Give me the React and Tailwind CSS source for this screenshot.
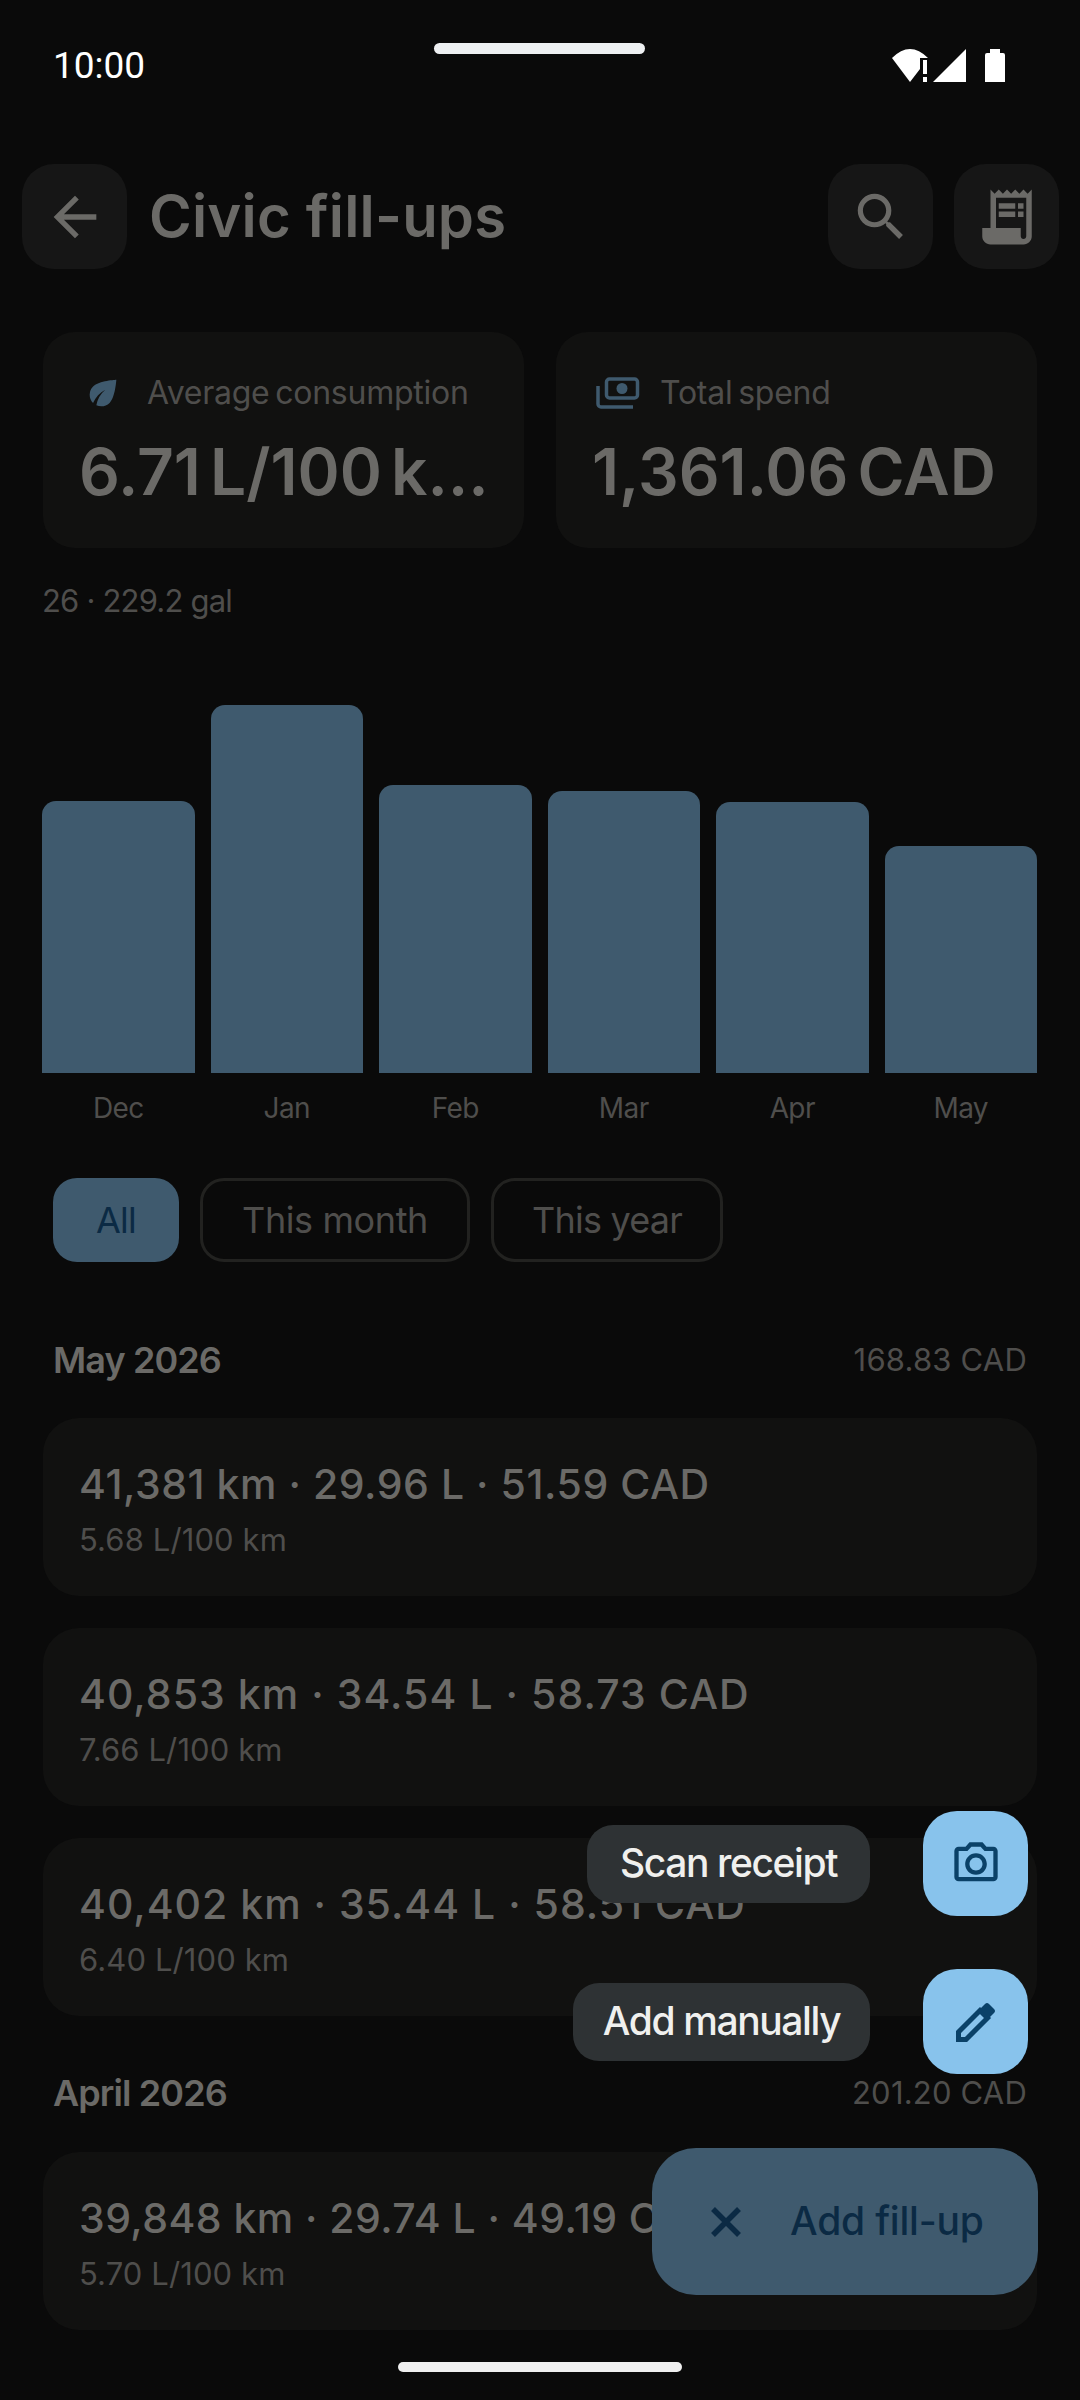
import { MdArrowBack, MdSearch, MdReceiptLong, MdEco, MdOutlinePhotoCamera } from 'react-icons/md'

const bars = [
  { label: 'Dec', height: 272 },
  { label: 'Jan', height: 368 },
  { label: 'Feb', height: 288 },
  { label: 'Mar', height: 282 },
  { label: 'Apr', height: 271 },
  { label: 'May', height: 227 },
]

function StatusIcons() {
  return (
    <svg width="120" height="34" viewBox="0 0 120 34" fill="white">
      <path d="M1 9 Q19 -9 37 9 L29 9 L29 20 L19 33 Z" />
      <rect x="32" y="11" width="4" height="14" />
      <rect x="32" y="28" width="4" height="5" />
      <path d="M42 33 L75 0 L75 33 Z" />
      <path d="M99 4 L99 0 L109 0 L109 4 L112 4 Q114 4 114 6 L114 33 L94 33 L94 6 Q94 4 96 4 Z" />
    </svg>
  )
}

function MoneyIcon() {
  return (
    <svg width="44" height="32" viewBox="0 0 44 32" fill="none" stroke="currentColor" strokeWidth="3.5" className="text-[#3f5a6e]">
      <rect x="10.5" y="2" width="31" height="19" rx="3" />
      <circle cx="26" cy="11.5" r="5.5" fill="currentColor" stroke="none" />
      <path d="M2 9 V27 a3 3 0 0 0 3 3 H37" />
    </svg>
  )
}

function PencilIcon() {
  return (
    <svg width="40" height="40" viewBox="0 0 40 40" fill="none" stroke="currentColor" strokeWidth="5">
      <path d="M2.5 30 L24 8.5 L31.5 16 L10 37.5 L2.5 37.5 Z" />
      <path d="M24 7 L29 2 Q31 0 33 2 L38 7 Q40 9 38 11 L33 16 Z" fill="currentColor" stroke="none" />
    </svg>
  )
}

function CloseIcon() {
  return (
    <svg width="30" height="30" viewBox="0 0 30 30" fill="none" stroke="currentColor" strokeWidth="5.5">
      <path d="M2 2 L28 28 M28 2 L2 28" />
    </svg>
  )
}

function SquareButton({ children }) {
  return (
    <div className="flex h-[105px] w-[105px] items-center justify-center rounded-[32px] bg-[#161616] text-[#6b6a67]">
      {children}
    </div>
  )
}

function StatCard({ icon, label, value, gap }) {
  return (
    <div className="h-[216px] w-[481px] rounded-[32px] bg-[#111110] px-[36px] pt-[39px]">
      <div className="flex h-[44px] items-center pl-[4px]" style={{ gap }}>
        {icon}
        <span className="text-[32px] leading-[44px] tracking-[-0.25px] whitespace-nowrap text-[#4f4e4c] [word-spacing:-3px]">{label}</span>
      </div>
      <div className="mt-[20px] text-[64px] leading-[74px] font-semibold tracking-[0px] whitespace-nowrap text-[#6b6a67] [word-spacing:-7px]">
        {value}
      </div>
    </div>
  )
}

function FillUpRow({ title, sub, tracking }) {
  return (
    <div className="h-[178px] rounded-[36px] bg-[#111110] px-[36px] pt-[39px]">
      <div className="text-[41px] leading-[54px] font-medium whitespace-nowrap text-[#6b6a67]" style={{ letterSpacing: tracking }}>
        {title}
      </div>
      <div className="mt-[9px] text-[31px] leading-[40px] tracking-[0.1px] text-[#4f4e4c]">{sub}</div>
    </div>
  )
}

function MonthHeader({ month, total }) {
  return (
    <div className="flex h-[52px] items-center justify-between px-[10px]">
      <span className="text-[36px] font-semibold tracking-[-0.9px] text-[#6b6a67]">{month}</span>
      <span className="text-[31px] tracking-[0.2px] text-[#4f4e4c]">{total}</span>
    </div>
  )
}

function MiniFab({ label, width, children }) {
  return (
    <div className="flex items-center justify-end gap-[53px]">
      <div
        className="flex h-[78px] items-center justify-center rounded-[26px] bg-[#2e3234] text-[39px] font-medium tracking-[-1.4px] text-[#f0f0ee]"
        style={{ width }}
      >
        {label}
      </div>
      <div className="flex h-[105px] w-[105px] items-center justify-center rounded-[34px] bg-[#88c3ec] text-[#0a4168]">
        {children}
      </div>
    </div>
  )
}

export default function App() {
  return (
    <div className="relative h-[2400px] w-[1080px] overflow-hidden bg-[#0a0a0a] font-['Inter',sans-serif]">
      <div className="relative h-[164px]">
        <div className="absolute top-[43px] left-[434px] h-[11px] w-[211px] rounded-full bg-[#eef0f2]" />
        <div className="absolute top-[44px] left-[53px] font-['Roboto',sans-serif] text-[37px] leading-[44px] text-white">10:00</div>
        <div className="absolute top-[49px] left-[891px]">
          <StatusIcons />
        </div>
      </div>

      <div className="flex h-[105px] items-center pr-[21px] pl-[22px]">
        <SquareButton>
          <MdArrowBack size={64} />
        </SquareButton>
        <h1 className="ml-[22px] text-[58px] font-semibold tracking-[0.2px] text-[#6b6a67]">Civic fill-ups</h1>
        <div className="ml-auto flex gap-[21px]">
          <SquareButton>
            <MdSearch size={62} />
          </SquareButton>
          <SquareButton>
            <MdReceiptLong size={66} />
          </SquareButton>
        </div>
      </div>

      <div className="px-[43px]">
        <div className="mt-[63px] flex justify-between">
          <StatCard
            icon={<MdEco size={40} className="text-[#3f5a6e]" />}
            label="Average consumption"
            gap={24}
            value="6.71 L/100 k…"
          />
          <StatCard
            icon={<MoneyIcon />}
            label="Total spend"
            gap={20}
            value="1,361.06 CAD"
          />
        </div>
        <div className="mt-[31px] -ml-px text-[31px] leading-[44px] tracking-[-0.8px] text-[#4f4e4c]">26 · 229.2 gal</div>

        <div className="mt-[82px] -ml-px flex h-[368px] items-end gap-[16px]">
          {bars.map((bar) => (
            <div
              key={bar.label}
              className="flex-1 rounded-t-[14px] bg-[#3f5a6e]"
              style={{ height: bar.height }}
            />
          ))}
        </div>
        <div className="mt-[16px] -ml-px flex gap-[16px]">
          {bars.map((bar) => (
            <div key={bar.label} className="flex-1 text-center text-[28px] leading-[38px] tracking-[-0.6px] text-[#4f4e4c]">
              {bar.label}
            </div>
          ))}
        </div>

        <div className="mt-[51px] flex gap-[21px] pl-[10px]">
          <div className="flex h-[84px] w-[126px] items-center justify-center rounded-[24px] bg-[#3f5a6e] text-[36px] tracking-[-0.8px] text-[#0b2a44]">
            All
          </div>
          <div className="flex h-[84px] w-[270px] items-center justify-center rounded-[24px] border-[3px] border-[#222220] text-[36px] tracking-[-0.4px] text-[#4f4e4c]">
            This month
          </div>
          <div className="flex h-[84px] w-[232px] items-center justify-center rounded-[24px] border-[3px] border-[#222220] text-[36px] tracking-[-0.8px] text-[#4f4e4c]">
            This year
          </div>
        </div>

        <div className="mt-[72px]">
          <MonthHeader month="May 2026" total="168.83 CAD" />
        </div>
        <div className="mt-[32px] flex flex-col gap-[32px]">
          <FillUpRow title="41,381 km · 29.96 L · 51.59 CAD" sub="5.68 L/100 km" tracking={0.55} />
          <FillUpRow title="40,853 km · 34.54 L · 58.73 CAD" sub="7.66 L/100 km" tracking={1.05} />
          <FillUpRow title="40,402 km · 35.44 L · 58.51 CAD" sub="6.40 L/100 km" tracking={1} />
        </div>
        <div className="mt-[51px]">
          <MonthHeader month="April 2026" total="201.20 CAD" />
        </div>
        <div className="mt-[33px]">
          <FillUpRow title="39,848 km · 29.74 L · 49.19 CAD" sub="5.70 L/100 km" tracking={0.45} />
        </div>
      </div>

      <div className="absolute top-[1811px] right-[52px] flex flex-col gap-[53px]">
        <MiniFab label="Scan receipt" width={283}>
          <MdOutlinePhotoCamera size={52} />
        </MiniFab>
        <MiniFab label="Add manually" width={297}>
          <PencilIcon />
        </MiniFab>
      </div>

      <div className="absolute top-[2148px] left-[652px] flex h-[147px] w-[386px] items-center rounded-[44px] bg-[#3f5a6e] pl-[59px] text-[#0b2a44]">
        <CloseIcon />
        <span className="ml-[49px] text-[39px] font-medium tracking-[-0.2px]">Add fill-up</span>
      </div>

      <div className="absolute top-[2362px] left-[398px] h-[10px] w-[284px] rounded-full bg-[#f0f0f0]" />
    </div>
  )
}
